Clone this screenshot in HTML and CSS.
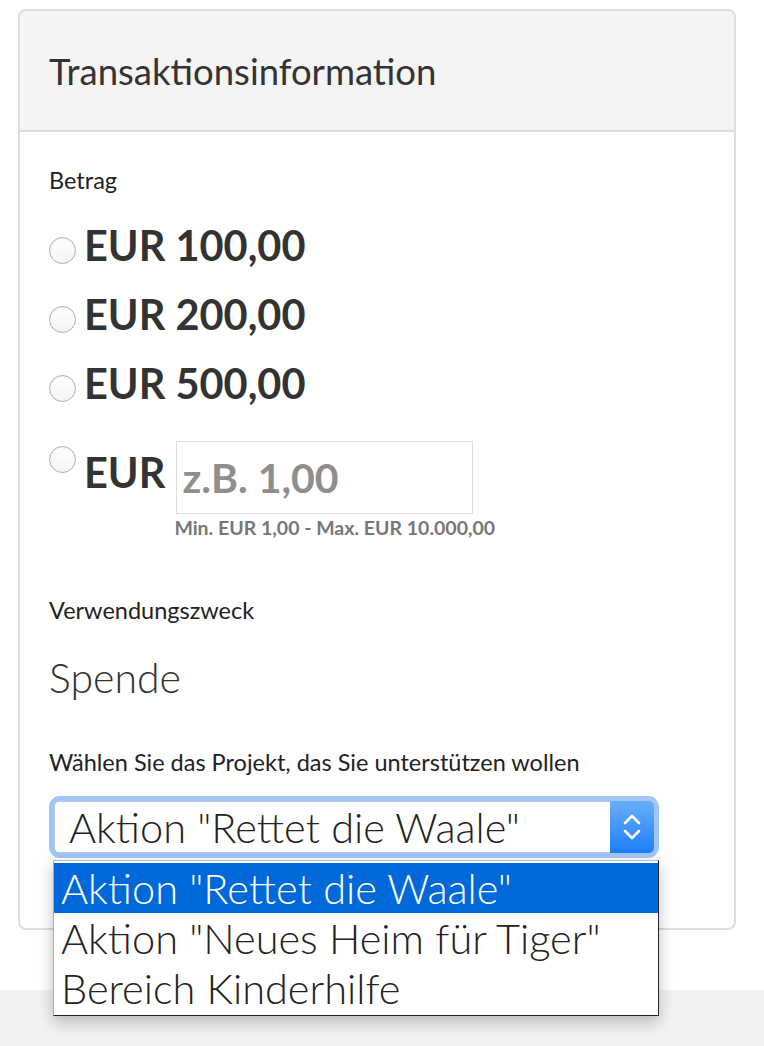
FILE: index.html
```html
<!DOCTYPE html>
<html lang="de">
<head>
  <meta charset="UTF-8">
  <title>Transaktionsinformation</title>
  <link rel="stylesheet" href="styles.css">
</head>
<body>

  <div class="page">
    <div class="panel">
      <div class="panel-header">
        <h2>Transaktionsinformation</h2>
      </div>

      <div class="panel-body">
        <div class="field-label">Betrag</div>

        <label class="amount"><input type="radio" name="amount"> EUR 100,00</label>
        <label class="amount"><input type="radio" name="amount"> EUR 200,00</label>
        <label class="amount"><input type="radio" name="amount"> EUR 500,00</label>

        <div class="amount custom">
          <input type="radio" name="amount">
          <span class="cur">EUR</span>
          <div class="custom-input">
            <input type="text" placeholder="z.B. 1,00">
            <small>Min. EUR 1,00 - Max. EUR 10.000,00</small>
          </div>
        </div>

        <div class="field-label purpose">Verwendungszweck</div>
        <div class="static-value">Spende</div>

        <div class="field-label project">Wählen Sie das Projekt, das Sie unterstützen wollen</div>

        <div class="select-wrap">
          <div class="select">
            <span class="select-text">Aktion "Rettet die Waale"</span>
            <span class="select-btn">
              <svg width="22" height="34" viewBox="0 0 22 34">
                <path d="M4 13 L11 6 L18 13" fill="none" stroke="#fff" stroke-width="2.6" stroke-linecap="round" stroke-linejoin="round"/>
                <path d="M4 21 L11 28 L18 21" fill="none" stroke="#fff" stroke-width="2.6" stroke-linecap="round" stroke-linejoin="round"/>
              </svg>
            </span>
          </div>
          <ul class="options">
            <li class="active">Aktion "Rettet die Waale"</li>
            <li>Aktion "Neues Heim für Tiger"</li>
            <li>Bereich Kinderhilfe</li>
          </ul>
        </div>
      </div>
    </div>
  </div>

  <div class="footer-strip"></div>

</body>
</html>
```

FILE: styles.css
```css
body {
  margin: 0;
  font-family: Lato, "Open Sans", Arial, sans-serif;
  color: #333;
  background-color: #fff;
}

.page { padding: 9px 28px 0 18px; }
.panel { border: 2px solid #ddd; border-radius: 8px; height: 921px; box-sizing: border-box; }
.panel-header { background-color: #f4f4f4; border-bottom: 2px solid #ddd; border-radius: 6px 6px 0 0; height: 119px; padding: 0 29px; display: flex; align-items: center; }
.panel-header h2 { margin: 0; font-size: 36.5px; font-weight: 400; color: #333; }

.panel-body { padding: 34px 29px 0; }
.field-label { font-size: 23.5px; line-height: 28px; color: #222; }
.purpose { margin-top: 56px; }
.project { margin-top: 46px; }
.static-value { font-size: 41px; font-weight: 300; line-height: 48px; margin-top: 30px; color: #333; }

label.amount,
.amount { display: flex; align-items: center; font-size: 41.5px; font-weight: 700; line-height: 69px; color: #333; }
label.amount { height: 69px; }
label.amount:first-of-type { margin-top: 17px; }

input[type="radio"] {
  appearance: none;
  -webkit-appearance: none;
  width: 27px; height: 27px; margin: 10px 8px 0 0;
  border: 1px solid #aeaeae; border-radius: 50%;
  background: linear-gradient(#fff, #f4f4f4);
  box-shadow: inset 0 1px 2px rgba(0,0,0,0.06);
  flex-shrink: 0;
}

.custom { align-items: flex-start; margin-top: 23px; line-height: normal; }
.custom input[type="radio"] { margin-top: 5px; }
.custom .cur { margin-top: 5px; margin-right: 11px; line-height: 52px; }
.custom-input input {
  display: block; width: 297px; height: 73px; box-sizing: border-box;
  border: 1px solid #ddd; padding: 0 5px;
  font-family: Lato, sans-serif; font-size: 41px; font-weight: 700; color: #333;
}
.custom-input input::placeholder { color: #8e8e8e; }
.custom-input small { display: block; font-size: 19.5px; line-height: 24px; font-weight: 700; color: #777; margin: 2px 0 0 -2px; }

.select-wrap { position: relative; margin-top: 20px; width: 610px; }
.select {
  height: 62px; box-sizing: border-box;
  border: 5px solid #a0c6f8; border-radius: 11px;
  display: flex; align-items: stretch;
  background: #fff;
}
.select-text { flex: 1; font-size: 41.5px; font-weight: 300; color: #222; padding-left: 14px; line-height: 51px; border: 1px solid #b9c8dc; border-right: 0; border-radius: 5px 0 0 5px; white-space: nowrap; }
.select-btn {
  width: 44px; display: flex; align-items: center; justify-content: center;
  background: linear-gradient(#6aaefc, #1c7ef6);
  border-radius: 0 5px 5px 0;
}

.options {
  position: absolute; left: 4px; top: 64px; width: 606px;
  margin: 0; padding: 2px 0 2px; list-style: none; box-sizing: border-box;
  background: #fff;
  border: 1px solid #222; border-left-color: #aaa; border-top-color: #bbb;
  box-shadow: 0 6px 14px rgba(0,0,0,0.25);
}
.options li { font-size: 41.5px; font-weight: 300; color: #222; line-height: 50px; padding-left: 7px; white-space: nowrap; }
.options li.active { background-color: #0068d9; color: #fff; }

.footer-strip { background-color: #f2f2f2; height: 56px; margin-top: 60px; }
```
